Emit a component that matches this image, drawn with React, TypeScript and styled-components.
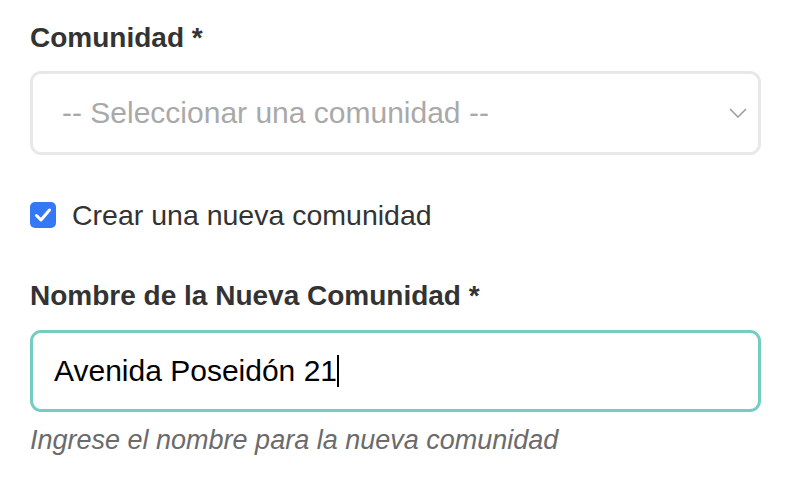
import * as React from "react"
import styled, { createGlobalStyle } from "styled-components"

const GlobalStyle = createGlobalStyle`
    html, body {
        margin: 0;
        padding: 0;
        background: #fff;
    }

    body {
        font-family: "Liberation Sans", Arial, sans-serif;
    }
`

const Form = styled.form`
    width: 731px;
    padding: 20px 0 0 30px;
    display: flex;
    flex-direction: column;
`

const Label = styled.label<{ spaced?: boolean }>`
    display: block;
    font-size: 28px;
    line-height: 36px;
    font-weight: 700;
    color: #333;
    margin-top: ${({ spaced }) => (spaced ? "45px" : "0")};
`

const SelectBox = styled.div`
    box-sizing: border-box;
    margin-top: 15px;
    height: 84px;
    display: flex;
    align-items: center;
    justify-content: space-between;
    padding: 0 11px 0 29px;
    border: 3px solid #e8e8e8;
    border-radius: 11px;
    background: #fff;
`

const Placeholder = styled.span`
    font-size: 30px;
    color: #a9a9a9;
`

const Chevron = styled.svg`
    width: 18px;
    height: 10px;
    color: #9a9a9a;
`

const CheckRow = styled.div`
    margin-top: 42px;
    height: 36px;
    display: flex;
    align-items: center;
    gap: 16px;
`

const CheckBox = styled.span`
    width: 26px;
    height: 26px;
    border-radius: 5px;
    background: #3478f6;
    display: flex;
    align-items: center;
    justify-content: center;
`

const CheckText = styled.span`
    font-size: 28.5px;
    color: #333;
`

const TextField = styled.div`
    box-sizing: border-box;
    margin-top: 16px;
    height: 82px;
    display: flex;
    align-items: center;
    padding: 0 20px 0 21px;
    border: 3px solid #74cdc1;
    border-radius: 11px;
    font-size: 30px;
    color: #000;
`

const Caret = styled.span`
    display: inline-block;
    width: 2px;
    height: 32px;
    margin-left: 0;
    background: #000;
`

const Help = styled.p`
    margin: 12px 0 0;
    font-size: 27px;
    line-height: 32px;
    font-style: italic;
    color: #6b6b6b;
`

export default function App() {
    return (
        <>
            <GlobalStyle />
            <Form>
                <Label>Comunidad *</Label>
                <SelectBox>
                    <Placeholder>-- Seleccionar una comunidad --</Placeholder>
                    <Chevron viewBox="0 0 18 10" fill="none">
                        <path d="M1 1l8 8 8-8" stroke="currentColor" strokeWidth="1.5" />
                    </Chevron>
                </SelectBox>
                <CheckRow>
                    <CheckBox>
                        <svg width="18" height="16" viewBox="0 0 18 16" fill="none">
                            <path
                                d="M2.5 8.5l4.5 4.5 8.5-10"
                                stroke="#fff"
                                strokeWidth="3"
                                strokeLinecap="round"
                                strokeLinejoin="round"
                            />
                        </svg>
                    </CheckBox>
                    <CheckText>Crear una nueva comunidad</CheckText>
                </CheckRow>
                <Label spaced>Nombre de la Nueva Comunidad *</Label>
                <TextField role="textbox">
                    Avenida Poseidón 21
                    <Caret />
                </TextField>
                <Help>Ingrese el nombre para la nueva comunidad</Help>
            </Form>
        </>
    )
}
